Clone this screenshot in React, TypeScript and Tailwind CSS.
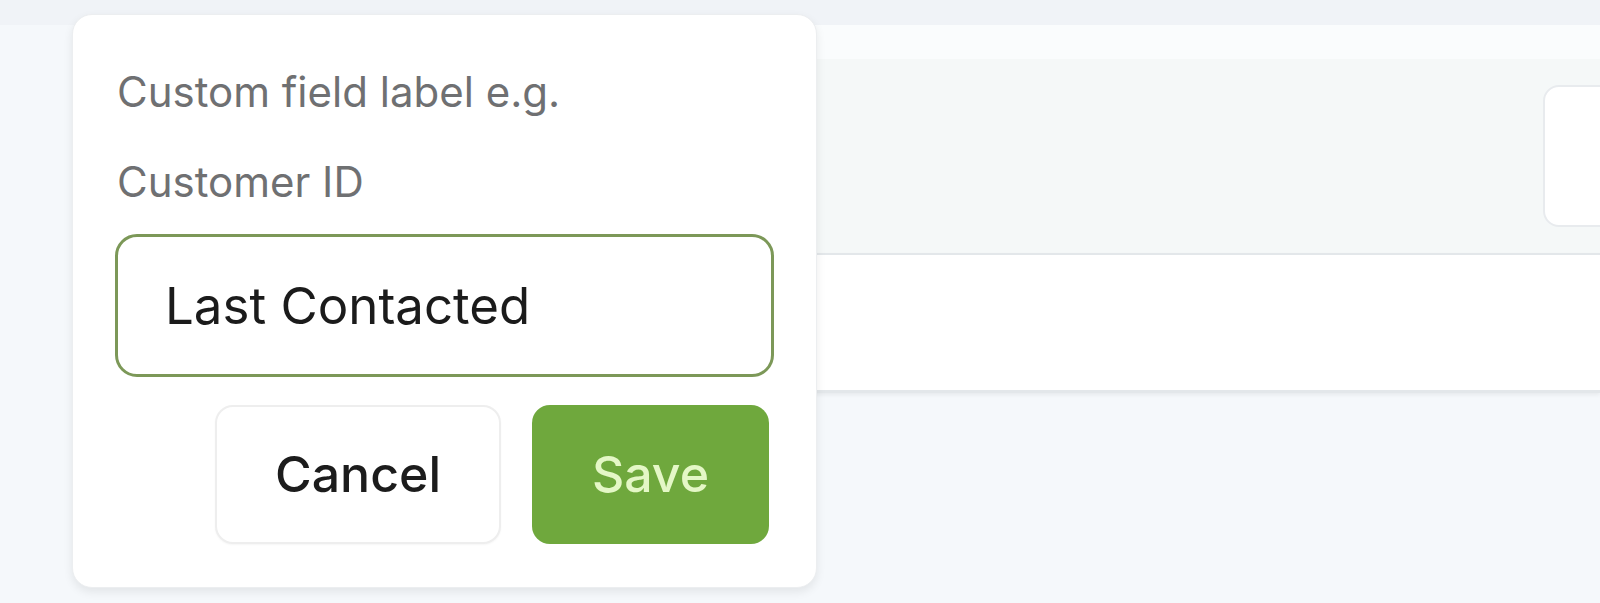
import React, { useState } from 'react';

export default function App() {
  const [label, setLabel] = useState('Last Contacted');

  return (
    <div className="relative h-[603px] w-full overflow-hidden bg-[#f5f8fb] font-['Inter',sans-serif]">
      {/* page behind the popover */}
      <div className="flex flex-col">
        <div className="h-[25px] bg-[#f0f3f7]" />
        <div className="flex">
          <div className="w-[760px] shrink-0" />
          <div className="flex flex-1 flex-col">
            <div className="h-[34px] bg-[#fafcfd]" />
            <div className="flex h-[194px] items-center justify-end bg-[#f5f8f8]">
              <div className="mr-[-20px] h-[142px] w-[77px] rounded-[16px] border-2 border-[#e8ebee] bg-white" />
            </div>
            <div className="h-[140px] border-t-2 border-b-[3px] border-[#e3e7ea] bg-white shadow-[0_2px_4px_rgba(0,0,0,0.06)]" />
          </div>
        </div>
      </div>

      {/* custom field popover */}
      <div className="absolute left-[72px] top-[14px] flex h-[574px] w-[745px] flex-col rounded-[20px] border border-[#eceef0] bg-white px-[42px] pt-[56px] shadow-[0_4px_10px_rgba(0,0,0,0.08)]">
        <p className="h-[42px] pl-[2px] text-[42px] leading-[42px] text-[#6f7072]">Custom field label e.g.</p>
        <p className="mt-[48px] h-[42px] pl-[2px] text-[42px] leading-[42px] text-[#6f7072]">Customer ID</p>
        <input
          value={label}
          onChange={(e) => setLabel(e.target.value)}
          className="mt-[31px] h-[143px] w-full rounded-[22px] border-[3px] border-[#7c9858] bg-white px-[47px] text-[51px] text-[#1b1b1b] outline-none"
        />
        <div className="mt-[28px] flex justify-end gap-[31px] pr-[5px]">
          <button className="h-[139px] w-[286px] rounded-[18px] border-2 border-[#eeeeee] bg-white text-[50px] font-medium text-[#1c1c1c] shadow-[0_1px_2px_rgba(0,0,0,0.04)]">
            Cancel
          </button>
          <button className="h-[139px] w-[237px] rounded-[18px] bg-[#6fa83d] text-[50px] font-medium text-[#e4f7c6]">
            Save
          </button>
        </div>
      </div>
    </div>
  );
}
